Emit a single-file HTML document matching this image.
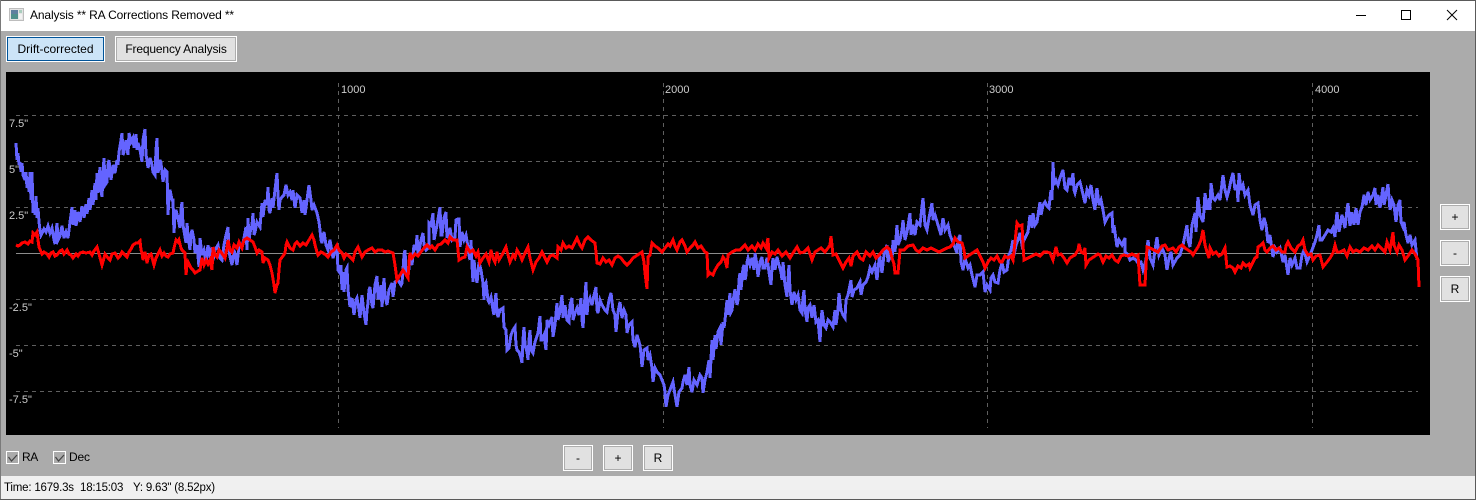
<!DOCTYPE html>
<html><head><meta charset="utf-8"><title>Analysis</title>
<style>
html,body{margin:0;padding:0;background:#ababab}
#w{position:relative;width:1476px;height:500px;overflow:hidden;background:#ababab;font-family:"Liberation Sans",sans-serif;font-size:12px;color:#000}
#w div{position:absolute;box-sizing:border-box;white-space:nowrap}
.btn{background:#e1e1e1;border:1px solid #fff;box-shadow:inset 0 0 0 1px #adadad;text-align:center;line-height:24px;height:26px;width:30px}
.l{color:#ccc;font-size:11px;line-height:13px}
</style></head><body>
<div id="w">
<div style="left:0;top:0;width:1476px;height:31px;background:#fff"></div>
<div style="left:0;top:0;width:1476px;height:1px;background:#5a5a5a"></div>
<div style="left:0;top:0;width:1px;height:500px;background:#7a7a7a"></div>
<div style="left:1475px;top:0;width:1px;height:500px;background:#5a5a5a"></div>
<svg style="position:absolute;left:9px;top:8px" width="16" height="14" viewBox="0 0 16 14"><rect x=".5" y=".5" width="14" height="12" fill="#e4e4e4" stroke="#bdbdbd"/><rect x="2" y="2" width="7" height="9" fill="#4f8f8c"/><rect x="2" y="2" width="7" height="4" fill="#5f7f9f"/><rect x="10" y="2" width="3" height="3" fill="#a9cdbd"/><rect x="10" y="6" width="3" height="5" fill="#f2f2f2"/></svg>
<div style="left:30px;top:8px;line-height:15px;letter-spacing:-.13px">Analysis ** RA Corrections Removed **</div>
<svg style="position:absolute;left:1350px;top:5px" width="115" height="20" viewBox="0 0 115 20" fill="none" stroke="#000" stroke-width="1" shape-rendering="crispEdges"><path d="M6 10.5H16"/><rect x="51.5" y="5.5" width="9" height="9"/><path d="M97 5L107 15M107 5L97 15" shape-rendering="geometricPrecision"/></svg>

<div style="left:6px;top:36px;width:99px;height:26px;background:#cce4f7;border:1px solid #fff;box-shadow:inset 0 0 0 1px #005499;text-align:center;line-height:24px">Drift-corrected</div>
<div class="btn" style="left:115px;top:36px;width:122px;letter-spacing:-.15px">Frequency Analysis</div>

<div style="left:6px;top:72px;width:1424px;height:363px;background:#000"></div>
<svg style="position:absolute;left:0;top:0" width="1476" height="500" viewBox="0 0 1476 500" fill="none">
<g stroke="#5f5f5f" stroke-width="1" stroke-dasharray="4 4" shape-rendering="crispEdges">
<path d="M16 115.5H1418M16 161.5H1418M16 207.5H1418M16 299.5H1418M16 345.5H1418M16 391.5H1418"/>
<path d="M338.5 83V428M663.5 83V428M987.5 83V428M1312.5 83V428"/>
</g>
<path d="M16 253.5H1418" stroke="#8c8c8c" stroke-width="1" shape-rendering="crispEdges"/>
<polyline shape-rendering="crispEdges" stroke="#6464ff" stroke-width="3" stroke-linejoin="miter" points="16,143 17,160 18,153 19,165 20,162 21,172 22,163 23,175 25,180 26,172 27,188 28,178 29,192 30,172 31,200 32,172 33,213 34,205 35,215 36,196 37,218 38,208 39,222 40,230 41,235 44,229 46,232 48,226 50,233 52,228 54,240 55,244 56,234 57,223 58,240 60,236 62,226 64,238 66,232 68,238 70,222 71,215 72,207 73,225 75,210 76,226 78,212 80,222 82,206 84,218 86,204 87,214 89,198 90,210 92,190 93,205 95,183 96,200 97,173 98,193 100,167 101,190 102,197 103,175 104,158 105,185 107,182 108,165 109,160 111,180 113,165 115,173 117,160 118,165 119,152 121,140 122,133 123,155 124,152 126,140 128,155 129,133 131,142 133,138 134,148 136,134 137,150 138,143 140,150 142,162 143,140 145,129 146,155 147,160 148,168 150,158 152,165 153,172 155,175 156,150 157,138 158,173 160,160 161,163 163,182 165,170 167,172 168,215 169,195 170,190 172,200 173,200 174,233 175,215 176,210 178,218 180,228 181,210 182,202 183,225 186,243 187,223 188,235 190,250 191,235 192,230 194,240 195,253 197,245 199,267 200,238 202,255 204,250 206,262 208,245 210,258 212,247 213,260 215,250 218,245 220,258 222,260 224,245 226,235 228,227 229,250 230,257 232,265 234,250 236,260 237,265 239,245 242,248 244,238 246,227 247,250 248,218 249,240 250,233 252,225 253,213 254,235 255,232 257,222 260,227 261,215 262,203 263,217 265,200 267,205 268,187 269,210 270,213 272,198 273,208 275,190 277,173 278,195 279,210 280,200 282,197 284,195 286,185 288,195 290,192 292,200 293,190 295,208 297,195 300,198 301,205 302,213 304,200 305,215 307,200 309,185 311,200 312,210 314,205 317,213 319,222 320,230 321,240 322,243 324,232 326,245 328,250 330,240 333,258 335,252 337,247 338,270 340,273 341,265 342,290 343,272 344,292 346,270 347,268 348,290 350,307 352,298 354,315 356,300 357,298 359,310 360,318 362,295 364,313 366,325 367,310 368,303 369,290 370,287 372,305 373,308 375,285 377,276 378,298 379,298 381,285 382,307 384,278 385,295 387,305 389,290 392,283 393,297 395,282 398,280 401,285 402,283 403,270 404,255 405,250 406,272 408,277 410,258 412,265 414,245 416,250 417,235 418,255 419,252 421,240 423,233 424,245 426,250 429,247 429,223 431,225 433,213 434,240 435,235 437,225 440,207 441,235 442,235 444,218 446,212 447,238 448,235 450,228 452,240 455,237 456,220 458,219 459,219 460,247 462,232 464,240 466,235 468,247 469,255 470,260 471,240 472,265 473,282 474,260 475,270 477,283 479,262 481,270 483,283 484,300 485,285 486,283 488,300 489,302 491,297 493,310 494,315 495,302 496,293 497,312 498,317 500,310 503,308 504,327 506,330 507,350 509,348 511,335 513,330 515,327 516,345 517,350 519,352 521,358 522,363 523,340 524,327 525,345 527,352 528,360 529,340 530,330 531,350 533,353 535,342 538,333 539,325 540,316 541,340 542,340 544,335 546,350 547,320 549,325 552,317 553,337 555,325 557,303 558,320 560,312 562,295 563,318 565,305 567,320 569,322 570,305 572,298 573,320 575,313 577,308 579,315 581,298 582,320 583,328 584,310 586,282 587,315 588,303 590,298 592,305 594,295 596,287 597,310 598,313 600,300 602,305 605,310 607,312 609,300 611,293 613,310 615,315 616,332 618,312 620,302 622,318 624,310 626,315 627,333 629,325 632,322 633,340 635,347 637,335 640,345 641,355 642,367 644,350 647,348 648,360 650,355 652,368 653,382 655,368 657,372 660,375 662,380 664,385 665,392 666,407 668,395 670,390 673,382 675,395 677,407 679,392 682,388 683,382 685,375 687,385 689,367 690,385 692,392 694,380 697,385 700,375 702,378 703,393 705,380 707,372 709,360 710,378 712,340 713,360 715,335 716,349 718,332 720,328 721,345 723,322 724,328 725,320 727,300 728,315 730,293 731,312 732,310 734,295 735,289 737,305 738,300 739,280 740,273 741,290 743,268 744,265 745,280 746,275 747,262 748,258 750,265 752,258 754,270 755,253 757,265 758,277 760,262 762,257 763,268 765,268 767,258 769,272 771,285 772,268 773,258 775,270 777,257 779,265 781,272 782,280 783,262 785,285 787,297 788,280 789,265 790,290 792,305 794,292 796,300 798,295 800,310 802,313 803,298 804,290 805,310 807,322 808,308 810,305 812,318 814,305 816,322 818,320 820,342 821,322 822,310 824,325 826,328 828,320 830,322 833,327 835,310 836,325 838,310 839,293 841,310 843,315 845,318 846,300 848,295 850,285 851,280 852,297 854,290 857,288 860,282 861,295 863,285 866,282 868,277 870,268 872,272 875,265 877,280 879,260 880,258 882,273 884,255 887,245 888,262 890,255 892,260 893,240 895,252 897,225 898,245 900,240 902,230 903,220 905,240 907,232 910,213 911,235 913,225 915,235 917,222 920,225 923,198 925,225 927,230 929,218 932,203 933,220 935,215 938,225 941,235 942,225 943,218 945,230 948,225 950,235 952,240 954,245 957,253 958,240 960,235 961,262 963,270 965,258 968,268 970,265 972,275 975,287 977,275 980,275 983,272 985,292 987,285 990,290 991,278 993,275 995,282 998,283 1000,270 1002,263 1004,272 1007,270 1009,255 1011,250 1013,240 1014,255 1016,245 1018,240 1020,233 1022,245 1025,238 1028,232 1030,215 1032,228 1033,213 1035,225 1037,222 1040,202 1041,215 1043,205 1045,202 1047,206 1049,208 1051,190 1052,200 1053,162 1054,185 1056,180 1058,185 1060,178 1063,170 1065,188 1067,190 1069,178 1071,185 1073,173 1074,190 1075,193 1077,185 1080,182 1082,190 1085,203 1087,190 1089,195 1091,185 1093,200 1095,210 1096,195 1097,188 1099,205 1101,200 1103,210 1105,222 1107,218 1109,215 1112,213 1113,233 1114,225 1117,247 1119,240 1122,245 1125,238 1125,252 1128,255 1130,260 1133,258 1136,260 1138,263 1141,262 1143,270 1146,260 1148,240 1150,258 1153,265 1155,250 1157,237 1159,255 1162,248 1165,255 1167,270 1169,258 1171,252 1173,265 1177,258 1180,255 1183,245 1185,235 1187,225 1188,240 1190,247 1192,225 1195,213 1196,232 1198,197 1200,215 1203,222 1204,210 1205,193 1207,210 1209,198 1210,210 1211,183 1213,198 1215,200 1218,195 1220,200 1223,175 1225,190 1227,197 1229,190 1231,180 1233,173 1235,190 1237,185 1238,202 1239,173 1241,190 1243,185 1245,195 1248,190 1250,205 1253,215 1255,205 1258,203 1260,220 1262,230 1264,218 1266,225 1268,243 1270,235 1273,257 1275,248 1277,252 1280,248 1283,262 1285,255 1288,275 1290,258 1292,265 1295,258 1297,268 1300,268 1302,255 1304,250 1307,262 1310,255 1312,250 1315,242 1317,235 1319,225 1320,240 1322,240 1325,235 1328,230 1331,232 1333,228 1335,237 1336,222 1337,212 1339,232 1342,215 1345,228 1347,210 1348,203 1350,226 1352,212 1354,225 1356,208 1358,225 1360,212 1362,207 1364,195 1366,205 1368,192 1370,200 1373,195 1375,188 1376,205 1378,195 1380,208 1383,187 1384,205 1386,195 1388,184 1390,210 1392,200 1394,205 1396,222 1398,205 1400,200 1401,222 1403,227 1404,222 1406,235 1408,243 1410,235 1412,245 1415,240 1416,250 1417,260"/>
<polyline shape-rendering="crispEdges" stroke="#ff0000" stroke-width="3" stroke-linejoin="miter" points="16,245 18,246 20,245 22,243 25,242 28,244 30,241 32,242 33,233 35,235 37,232 38,240 39,247 42,254 44,252 47,254 49,257 51,253 53,252 55,256 57,255 60,251 62,250 64,254 67,250 69,254 71,255 73,258 76,254 78,256 80,253 83,252 86,253 90,252 92,255 94,251 97,247 99,254 102,265 104,258 105,254 108,258 110,260 112,254 115,253 118,258 120,256 122,252 125,255 127,257 129,252 131,249 133,245 136,243 138,243 140,241 141,250 142,253 143,260 145,252 146,257 147,263 149,255 151,254 154,265 156,258 158,254 160,250 162,256 164,253 166,256 168,257 170,254 173,253 174,248 176,240 178,242 179,240 181,248 182,250 185,253 186,275 187,265 188,262 191,268 193,270 195,273 198,271 200,270 202,258 204,265 206,260 208,264 210,260 212,270 213,247 215,255 217,257 219,250 221,252 223,255 225,258 227,248 228,240 230,250 232,252 234,245 237,248 239,242 242,248 244,240 247,238 250,240 253,242 255,247 257,253 259,250 262,252 263,263 265,258 268,260 270,265 272,273 274,285 275,293 277,285 278,283 279,270 280,260 283,256 285,253 286,245 287,242 290,248 293,250 295,244 297,242 300,246 303,243 306,245 309,240 312,235 314,240 315,245 317,252 318,255 321,252 323,253 326,255 328,257 331,252 334,250 337,245 339,250 342,253 344,258 346,254 349,256 353,260 355,252 358,247 360,252 362,257 365,252 368,250 372,248 375,252 378,250 382,250 385,252 388,251 393,253 395,265 397,280 400,275 403,270 405,273 408,278 409,262 410,253 412,258 415,254 418,256 420,253 424,248 427,245 430,248 432,246 435,250 438,245 441,244 445,240 448,243 450,237 453,240 457,240 458,250 459,260 462,258 465,257 467,247 470,252 473,250 476,256 478,252 480,263 483,258 486,254 489,262 491,250 493,258 495,262 497,252 499,260 502,255 504,251 506,247 508,255 510,262 513,255 515,258 517,250 520,255 522,260 525,253 528,247 530,258 533,270 536,262 539,258 542,252 545,258 547,262 550,256 553,255 557,258 558,247 561,250 563,243 566,248 569,246 572,248 575,242 577,238 580,245 582,248 585,240 588,237 591,240 595,243 596,252 597,263 600,264 603,258 606,262 609,260 612,265 615,258 618,256 621,258 624,262 627,265 630,262 633,258 636,256 639,254 642,252 644,262 645,273 647,289 648,257 650,255 652,243 655,246 658,248 662,252 665,248 668,244 670,246 673,240 675,246 677,250 680,242 682,240 685,246 687,252 690,248 693,245 695,242 698,248 701,246 705,252 707,253 708,275 710,273 713,275 715,270 718,265 721,262 723,257 725,260 727,268 728,255 732,252 736,250 740,250 745,245 748,250 752,246 755,250 758,244 761,248 763,243 766,248 768,238 769,258 772,252 775,254 778,250 782,256 786,252 790,258 793,253 795,250 797,247 800,253 804,252 808,248 810,254 812,260 815,252 818,250 821,248 825,252 828,248 830,245 831,236 833,255 836,254 838,258 840,262 843,268 846,262 849,258 851,266 853,256 855,254 857,252 860,258 863,260 866,252 870,256 873,252 876,258 880,254 883,250 887,247 890,250 892,258 894,264 895,273 898,273 899,262 900,250 904,250 908,246 913,245 916,250 919,252 923,248 927,250 931,248 935,250 939,252 943,250 947,248 950,247 953,244 955,238 958,242 962,243 964,250 965,258 968,256 971,254 974,252 977,250 980,256 983,262 985,268 988,262 991,258 994,260 997,256 1000,262 1002,262 1005,256 1008,258 1011,256 1013,260 1015,242 1017,223 1019,226 1022,225 1023,245 1024,260 1028,258 1032,256 1036,254 1040,256 1044,252 1047,252 1050,253 1053,260 1056,247 1058,255 1061,254 1064,258 1067,263 1070,258 1073,256 1075,255 1078,250 1079,244 1081,252 1083,253 1085,248 1086,265 1089,260 1092,258 1095,256 1098,254 1100,255 1103,262 1106,256 1109,258 1112,255 1115,260 1118,262 1121,256 1124,255 1128,256 1132,254 1136,256 1138,255 1139,270 1140,285 1145,285 1146,265 1147,247 1150,248 1154,250 1158,252 1162,246 1165,245 1168,250 1173,248 1176,252 1179,247 1182,245 1185,248 1188,250 1191,252 1193,255 1196,250 1198,247 1201,240 1203,230 1205,245 1207,252 1209,258 1210,248 1213,254 1216,252 1219,256 1222,254 1225,248 1226,258 1227,267 1230,266 1233,268 1235,272 1238,266 1241,268 1243,263 1246,266 1249,264 1250,268 1253,262 1255,258 1257,257 1258,247 1261,245 1263,243 1265,250 1267,252 1270,248 1273,246 1276,250 1279,248 1282,252 1285,252 1286,246 1288,242 1291,248 1295,252 1298,246 1301,244 1303,240 1305,250 1308,255 1311,254 1313,260 1316,256 1320,255 1323,267 1327,262 1330,258 1333,253 1335,245 1337,252 1340,252 1344,250 1347,256 1350,247 1353,252 1356,250 1360,252 1364,248 1368,250 1372,246 1375,250 1378,245 1381,248 1385,252 1387,242 1390,250 1393,232 1394,245 1397,252 1399,245 1402,250 1405,260 1408,256 1412,250 1415,254 1418,260 1419,287"/>
</svg>
<div class="l" style="left:341px;top:84px">1000</div>
<div class="l" style="left:665px;top:84px">2000</div>
<div class="l" style="left:989px;top:84px">3000</div>
<div class="l" style="left:1315px;top:84px">4000</div>
<div class="l" style="left:9px;top:118px">7.5"</div>
<div class="l" style="left:9px;top:164px">5"</div>
<div class="l" style="left:9px;top:210px">2.5"</div>
<div class="l" style="left:9px;top:302px">-2.5"</div>
<div class="l" style="left:9px;top:348px">-5"</div>
<div class="l" style="left:9px;top:394px">-7.5"</div>

<div class="btn" style="left:1440px;top:204px">+</div>
<div class="btn" style="left:1440px;top:240px">-</div>
<div class="btn" style="left:1440px;top:276px">R</div>
<div class="btn" style="left:563px;top:445px">-</div>
<div class="btn" style="left:603px;top:445px">+</div>
<div class="btn" style="left:643px;top:445px">R</div>

<svg style="position:absolute;left:6px;top:451px" width="14" height="14" viewBox="0 0 14 14"><rect x=".5" y=".5" width="12" height="12" fill="#ababab" stroke="#fff"/><path d="M2.5 6L5.5 10L11 4" fill="none" stroke="#444" stroke-width="1.2"/></svg>
<div style="left:22px;top:450px;line-height:15px;letter-spacing:-.4px">RA</div>
<svg style="position:absolute;left:53px;top:451px" width="14" height="14" viewBox="0 0 14 14"><rect x=".5" y=".5" width="12" height="12" fill="#ababab" stroke="#fff"/><path d="M2.5 6L5.5 10L11 4" fill="none" stroke="#444" stroke-width="1.2"/></svg>
<div style="left:69px;top:450px;line-height:15px;letter-spacing:-.2px">Dec</div>

<div style="left:1px;top:476px;width:1474px;height:23px;background:#f0f0f0"></div>
<div style="left:4px;top:481px;line-height:15px;font-size:11.5px;letter-spacing:-.2px">Time: 1679.3s</div>
<div style="left:80px;top:481px;line-height:15px;font-size:11.5px;letter-spacing:-.2px">18:15:03</div>
<div style="left:133px;top:481px;line-height:15px;font-size:11.5px;letter-spacing:-.2px">Y: 9.63" (8.52px)</div>
<div style="left:0;top:499px;width:1476px;height:1px;background:#5a5a5a"></div>
</div>
</body></html>
